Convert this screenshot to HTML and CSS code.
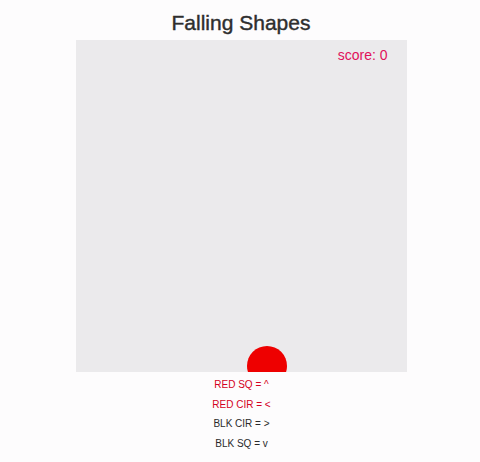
FILE: index.html
```html
<!DOCTYPE html>
<html>
<head>
<meta charset="utf-8">
<link rel="stylesheet" href="styles.css">
</head>
<body>
<h1 class="title">Falling Shapes</h1>
<div class="board">
  <div class="score">score: 0</div>
  <div class="ball"></div>
</div>
<ul class="keys">
  <li class="red">RED SQ = ^</li>
  <li class="red">RED CIR = &lt;</li>
  <li>BLK CIR = &gt;</li>
  <li>BLK SQ = v</li>
</ul>
</body>
</html>
```
FILE: styles.css
```css
html, body {
  margin: 0;
  padding: 0;
  background: #fdfcfd;
  font-family: "Liberation Sans", Arial, sans-serif;
}
body {
  display: flex;
  flex-direction: column;
  align-items: center;
  padding-left: 2px;
}
.title {
  margin: 0;
  height: 40px;
  line-height: 45px;
  font-size: 21px;
  font-weight: normal;
  -webkit-text-stroke: 0.4px #2e2e2e;
  color: #2e2e2e;
}
.board {
  position: relative;
  width: 331px;
  height: 332px;
  background: #ebeaec;
  overflow: hidden;
}
.score {
  position: absolute;
  top: 7px;
  right: 19px;
  font-size: 14px;
  color: #e0105a;
}
.ball {
  position: absolute;
  left: 171px;
  top: 306px;
  width: 40px;
  height: 40px;
  border-radius: 50%;
  background: #ee0000;
}
.keys {
  list-style: none;
  margin: 0;
  padding: 3px 0 0 1px;
  text-align: center;
  font-size: 10px;
  line-height: 19.7px;
  color: #2a2a2a;
}
.keys .red {
  color: #d40022;
}
```
